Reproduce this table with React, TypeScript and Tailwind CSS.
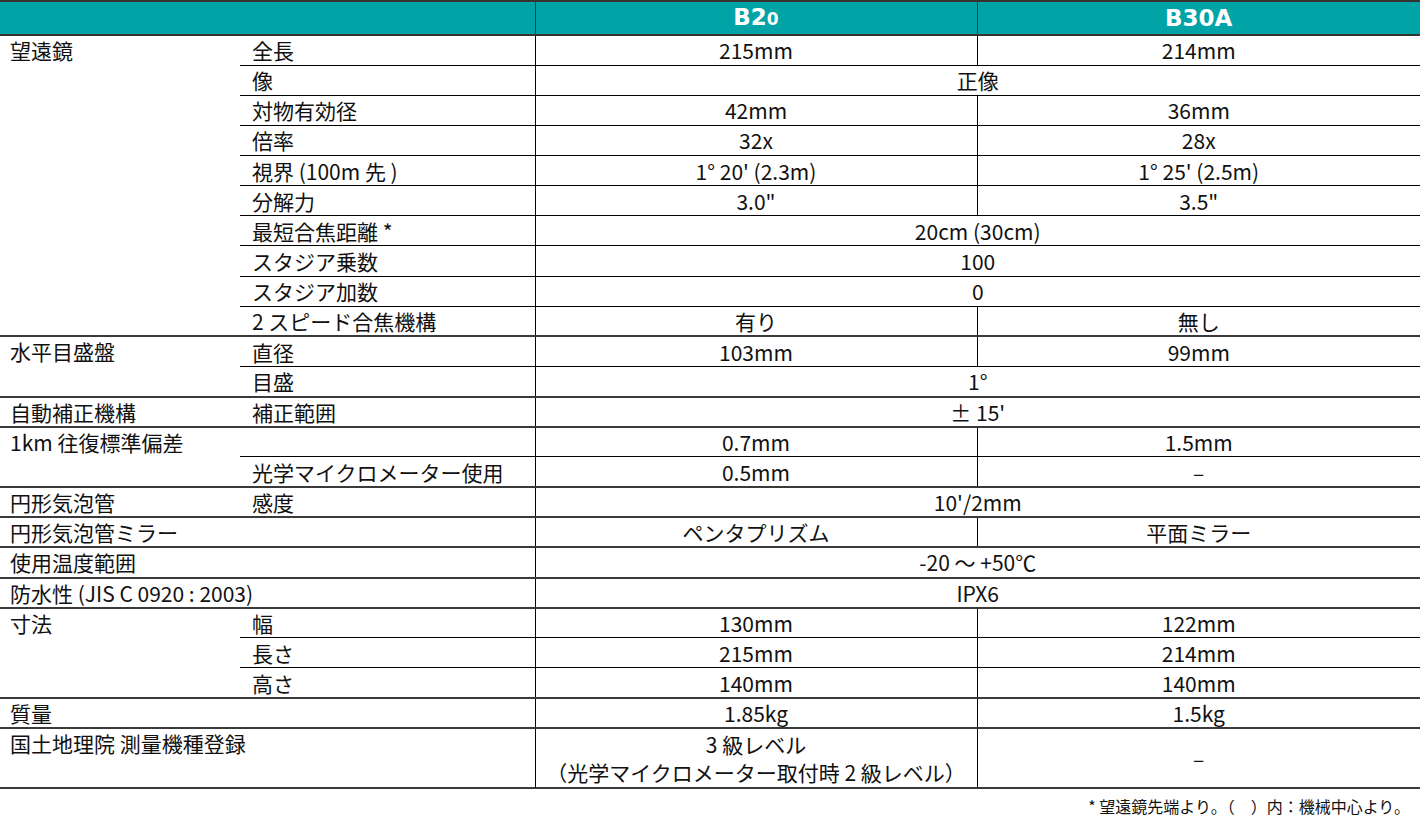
import type { ReactNode } from 'react';

type SpecRow = {
  group?: string;
  span?: number;
  wide?: boolean;
  sub?: string;
  values: ReactNode[];
  end?: boolean;
  tall?: boolean;
};

const rows: SpecRow[] = [
  { group: '望遠鏡', span: 10, sub: '全長', values: ['215mm', '214mm'] },
  { sub: '像', values: ['正像'] },
  { sub: '対物有効径', values: ['42mm', '36mm'] },
  { sub: '倍率', values: ['32x', '28x'] },
  { sub: '視界 (100m 先 )', values: ["1° 20' (2.3m)", "1° 25' (2.5m)"] },
  { sub: '分解力', values: ['3.0"', '3.5"'] },
  { sub: '最短合焦距離 *', values: ['20cm (30cm)'] },
  { sub: 'スタジア乗数', values: ['100'] },
  { sub: 'スタジア加数', values: ['0'] },
  { sub: '2 スピード合焦機構', values: ['有り', '無し'], end: true },
  { group: '水平目盛盤', span: 2, sub: '直径', values: ['103mm', '99mm'] },
  { sub: '目盛', values: ['1°'], end: true },
  { group: '自動補正機構', span: 1, sub: '補正範囲', values: ["± 15'"], end: true },
  { group: '1km 往復標準偏差', span: 2, sub: '', values: ['0.7mm', '1.5mm'] },
  { sub: '光学マイクロメーター使用', values: ['0.5mm', '–'], end: true },
  { group: '円形気泡管', span: 1, sub: '感度', values: ["10'/2mm"], end: true },
  { group: '円形気泡管ミラー', wide: true, values: ['ペンタプリズム', '平面ミラー'], end: true },
  { group: '使用温度範囲', wide: true, values: ['-20 ～ +50℃'], end: true },
  { group: '防水性 (JIS C 0920 : 2003)', wide: true, values: ['IPX6'], end: true },
  { group: '寸法', span: 3, sub: '幅', values: ['130mm', '122mm'] },
  { sub: '長さ', values: ['215mm', '214mm'] },
  { sub: '高さ', values: ['140mm', '140mm'], end: true },
  { group: '質量', wide: true, values: ['1.85kg', '1.5kg'], end: true },
  {
    group: '国土地理院 測量機種登録',
    wide: true,
    values: [
      <>
        3 級レベル
        <br />
        （光学マイクロメーター取付時 2 級レベル）
      </>,
      '–',
    ],
    end: true,
    tall: true,
  },
];

const thin = 'border-b border-black';
const thick = 'border-b-2 border-[#3a3a3a]';

export default function App() {
  return (
    <div
      className="h-[817px] w-[1420px] overflow-hidden bg-white text-[21px] text-[#111] leading-[28px]"
      style={{ fontFamily: '"Noto Sans CJK JP", "Noto Sans", sans-serif' }}
    >
      <table className="w-full table-fixed border-collapse">
        <colgroup>
          <col className="w-[240px]" />
          <col className="w-[295px]" />
          <col className="w-[442px]" />
          <col className="w-[443px]" />
        </colgroup>
        <thead>
          <tr className="h-[34px] border-t-2 border-[#333] bg-[#00a4a6] text-white">
            <th colSpan={2} className="border-b-2 border-[#333]" />
            <th
              className="border-b-2 border-l border-[#333] text-[23px] leading-[30px] font-bold"
              style={{ fontFamily: '"DejaVu Sans", sans-serif' }}
            >
              B2<span className="text-[17px]">0</span>
            </th>
            <th
              className="border-b-2 border-l border-[#333] text-[23px] leading-[30px] font-bold"
              style={{ fontFamily: '"DejaVu Sans", sans-serif' }}
            >
              B30A
            </th>
          </tr>
        </thead>
        <tbody>
          {rows.map((row, i) => {
            const line = row.end ? thick : thin;
            return (
              <tr key={i} className={row.tall ? 'h-[60px]' : 'h-[30.15px]'}>
                {row.group !== undefined && (
                  <td
                    rowSpan={row.wide ? 1 : row.span}
                    colSpan={row.wide ? 2 : 1}
                    className={`${thick} px-[10px] align-top whitespace-nowrap`}
                  >
                    <div>{row.group}</div>
                  </td>
                )}
                {!row.wide && (
                  <td className={`${line} pl-[12px] align-middle whitespace-nowrap`}>{row.sub}</td>
                )}
                {row.values.length === 1 ? (
                  <td colSpan={2} className={`${line} border-l border-l-black text-center align-middle`}>
                    {row.values[0]}
                  </td>
                ) : (
                  row.values.map((value, j) => (
                    <td
                      key={j}
                      className={`${line} border-l border-l-black text-center align-middle whitespace-nowrap`}
                    >
                      {value}
                    </td>
                  ))
                )}
              </tr>
            );
          })}
        </tbody>
      </table>
      <p className="mt-[8px] pr-[10px] text-right text-[16px] leading-[19px]">
        * 望遠鏡先端より。（　）内：機械中心より。
      </p>
    </div>
  );
}
